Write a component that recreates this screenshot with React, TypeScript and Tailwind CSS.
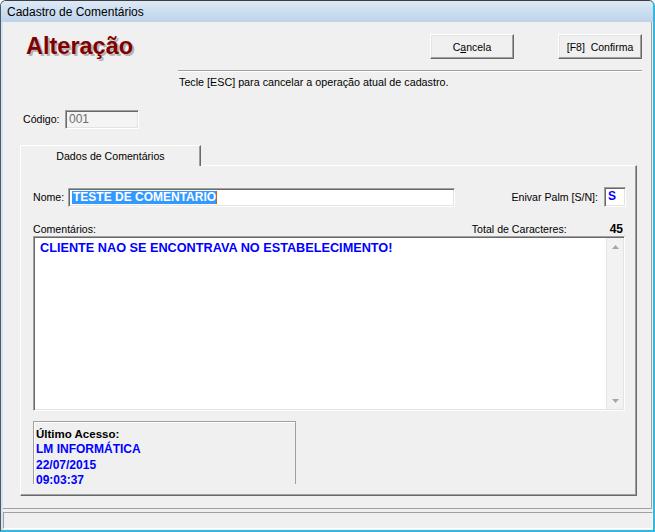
import React from "react";

const sunken =
  "border border-t-[#a0a0a0] border-l-[#a0a0a0] border-b-white border-r-white shadow-[inset_1px_1px_0_#696969,inset_-1px_-1px_0_#e3e3e3]";
const raised =
  "border border-t-white border-l-white border-r-[#696969] border-b-[#696969] shadow-[inset_-1px_-1px_0_#a0a0a0,inset_1px_1px_0_#e3e3e3]";

export default function App() {
  return (
    <div className="w-[655px] h-[532px] flex flex-col overflow-hidden rounded-t-[6px] border-t border-l border-t-[#3e3e3e] border-l-[#4a5a6a] border-r-2 border-r-[#36b6dc] border-b-2 border-b-[#36b6dc] bg-[#f0f0f0] font-['Liberation_Sans',Arial,sans-serif] text-black">
      {/* title bar */}
      <div className="h-[21px] shrink-0 bg-linear-to-b from-[#dde9f6] to-[#bdd3eb] pl-[6px] pt-[4px] text-[12px] leading-[14px] text-black">
        Cadastro de Comentários
      </div>
      {/* body */}
      <div className="flex-1 flex flex-col border-l-2 border-l-[#d6e3f1]">
        {/* form area */}
        <div className="w-[649px] h-[487px] shrink-0 flex flex-col border-r border-b border-[#a0a0a0]">
          {/* header row */}
          <div className="flex items-start justify-between pt-[12px] pl-[23px] pr-[9px]">
            <div className="h-[25px] text-[23.5px] leading-[25px] font-bold text-[#800000] [text-shadow:2px_2px_0_#b4b4b4]">
              Alteração
            </div>
            <div className="flex gap-[44px]">
              <button className={`${raised} w-[84px] h-[25px] bg-[#f0f0f0] text-[10.5px] leading-[12px] flex items-center justify-center`}>
                C<span className="underline">a</span>ncela
              </button>
              <button className={`${raised} w-[84px] h-[25px] bg-[#f0f0f0] text-[10.5px] leading-[12px] flex items-center justify-center whitespace-pre`}>
                {"[F8]  Confirma"}
              </button>
            </div>
          </div>
          {/* separator */}
          <div className="mt-[11px] ml-[175px] mr-[9px] h-[2px] border-t border-t-[#a0a0a0] border-b border-b-white" />
          <div className="mt-[4px] pl-[176px] text-[10.75px] leading-[13px]">
            Tecle [ESC] para cancelar a operação atual de cadastro.
          </div>
          {/* codigo */}
          <div className="mt-[21px] pl-[20px] flex items-center">
            <div className="w-[42px] text-[10.6px] leading-[13px]">Código:</div>
            <div className={`${sunken} w-[74px] h-[19px] bg-[#f4f4f4] pl-[3px] text-[12px] leading-[16px] text-[#6d6d6d]`}>
              001
            </div>
          </div>
          {/* tab */}
          <div className="mt-[16px] ml-[17px] relative z-10 mb-[-1px] w-[181px] h-[21px] bg-[#f0f0f0] border-t border-l border-white border-r border-r-[#696969] shadow-[inset_-1px_0_0_#a0a0a0] flex items-center justify-center text-[10.6px] leading-[13px]">
            Dados de Comentários
          </div>
          {/* panel */}
          <div className="ml-[17px] w-[617px] h-[331px] flex flex-col border-t border-l border-white border-r border-b border-r-[#696969] border-b-[#696969] shadow-[inset_-1px_-1px_0_#a0a0a0]">
            {/* nome row */}
            <div className="mt-[21px] h-[20px] pl-[12px] pr-[10px] flex items-center justify-between">
              <div className="flex items-center">
                <div className="w-[35px] text-[10.6px] leading-[13px]">Nome:</div>
                <div className={`${sunken} w-[387px] h-[19px] bg-white pl-[3px] pt-[2px] flex items-start`}>
                  <span className="bg-[#3399ff] text-white font-bold text-[12px] leading-[13px] pl-[1px]">
                    TESTE DE COMENTARIO
                  </span>
                  <span className="w-[1px] h-[13px] bg-[#c86414]" />
                </div>
              </div>
              <div className="flex items-center gap-[6px]">
                <div className="text-[10.6px] leading-[13px]">Enivar Palm [S/N]:</div>
                <div className={`${sunken} w-[22px] h-[20px] bg-white pl-[3px] text-[12px] leading-[17px] font-bold text-[#0000ff]`}>
                  S
                </div>
              </div>
            </div>
            {/* comentarios label row */}
            <div className="mt-[16px] h-[13px] pl-[12px] pr-[13px] flex items-center justify-between text-[10.6px] leading-[13px]">
              <div>Comentários:</div>
              <div className="flex items-center gap-[43px]">
                <div>Total de Caracteres:</div>
                <div className="font-bold text-[12px]">45</div>
              </div>
            </div>
            {/* textarea */}
            <div className={`${sunken} ml-[12px] w-[592px] h-[175px] bg-white flex p-[1px]`}>
              <div className="flex-1 pl-[5px] pt-[3px] text-[12.7px] leading-[15px] font-bold text-[#0000ff]">
                CLIENTE NAO SE ENCONTRAVA NO ESTABELECIMENTO!
              </div>
              <div className="w-[17px] h-full flex flex-col justify-between bg-[#f2f2f2] border-l border-l-[#e6e6e6]">
                <div className="h-[17px] flex items-center justify-center">
                  <svg width="7" height="4" viewBox="0 0 7 4">
                    <path d="M3.5 0 L7 4 L0 4 Z" fill="#a6a6a6" />
                  </svg>
                </div>
                <div className="h-[17px] flex items-center justify-center">
                  <svg width="7" height="4" viewBox="0 0 7 4">
                    <path d="M0 0 L7 0 L3.5 4 Z" fill="#a6a6a6" />
                  </svg>
                </div>
              </div>
            </div>
            {/* ultimo acesso */}
            <div className="mt-[10px] ml-[12px] w-[263px] h-[63px] border-t border-l border-r border-[#a0a0a0] shadow-[inset_1px_1px_0_#ffffff] pl-[2px] pt-[5px] text-[12px] leading-[15.3px] font-bold">
              <div className="text-black text-[11.5px]">Último Acesso:</div>
              <div className="text-[#0000ff]">LM INFORMÁTICA</div>
              <div className="text-[#0000ff]">22/07/2015</div>
              <div className="text-[#0000ff]">09:03:37</div>
            </div>
          </div>
        </div>
        {/* status bar */}
        <div className="mt-[3px] h-[17px] w-[650px] border border-t-[#a0a0a0] border-l-[#a0a0a0] border-b-white border-r-white" />
      </div>
    </div>
  );
}
